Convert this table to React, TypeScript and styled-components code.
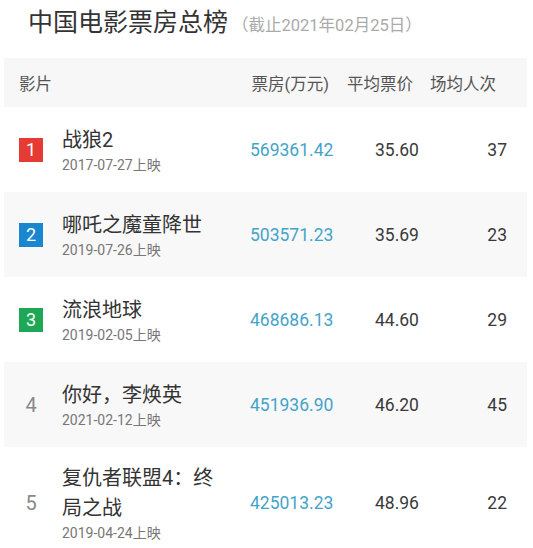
import React from "react";
import styled, { createGlobalStyle } from "styled-components";

const Global = createGlobalStyle`
  html, body { margin: 0; padding: 0; background: #fff; }
  body { font-family: Roboto, "Noto Sans CJK SC", "Noto Sans", sans-serif; color: #333; }
`;

const Page = styled.div`
  width: 533px;
  padding: 6px 6px 0 4px;
  box-sizing: border-box;
`;

const TitleBar = styled.div`
  display: flex;
  align-items: baseline;
  padding-left: 24px;
  height: 52px;
`;

const Title = styled.h1`
  margin: 0;
  font-size: 25px;
  font-weight: 400;
  line-height: 34px;
  color: #333;
`;

const Sub = styled.span`
  margin-left: 4px;
  font-size: 16.5px;
  color: #aaa;
`;

const HeadRow = styled.div`
  display: flex;
  align-items: center;
  height: 49px;
  padding: 0 31px 0 15px;
  background: #f7f7f7;
  font-size: 16.5px;
  color: #555;
`;

const HeadFilm = styled.div`
  flex: 1;
`;

const HeadCell = styled.div<{ $gap: number }>`
  margin-left: ${(p) => p.$gap}px;
`;

const Row = styled.div<{ $alt: boolean }>`
  display: grid;
  grid-template-columns: 246px 125px 1fr 60px;
  align-items: center;
  min-height: 85px;
  padding: 16px 20px 16px 0;
  box-sizing: border-box;
  background: ${(p) => (p.$alt ? "#f8f8f8" : "#fff")};
`;

const Film = styled.div`
  display: flex;
  align-items: center;
  padding-left: 15px;
`;

const Badge = styled.div<{ $color?: string }>`
  flex: none;
  width: 24px;
  height: 24px;
  display: flex;
  align-items: center;
  justify-content: center;
  background: ${(p) => p.$color || "transparent"};
  color: ${(p) => (p.$color ? "#fff" : "#888")};
  font-size: ${(p) => (p.$color ? "18px" : "20px")};
`;

const FilmText = styled.div`
  margin-left: 19px;
  max-width: 160px;
`;

const FilmName = styled.div`
  font-size: 20px;
  line-height: 30px;
  color: #333;
`;

const FilmDate = styled.div`
  font-size: 14px;
  line-height: 20px;
  color: #777;
`;

const Box = styled.div`
  font-size: 17.5px;
  color: #45a3c9;
`;

const Num = styled.div<{ $right?: boolean }>`
  font-size: 17.5px;
  color: #3a3a3a;
  text-align: ${(p) => (p.$right ? "right" : "left")};
`;

const data = [
  { rank: 1, color: "#e63a35", name: "战狼2", date: "2017-07-27上映", box: "569361.42", avg: "35.60", cnt: "37" },
  { rank: 2, color: "#1a86d0", name: "哪吒之魔童降世", date: "2019-07-26上映", box: "503571.23", avg: "35.69", cnt: "23" },
  { rank: 3, color: "#1ea755", name: "流浪地球", date: "2019-02-05上映", box: "468686.13", avg: "44.60", cnt: "29" },
  { rank: 4, color: "", name: "你好，李焕英", date: "2021-02-12上映", box: "451936.90", avg: "46.20", cnt: "45" },
  { rank: 5, color: "", name: "复仇者联盟4：终局之战", date: "2019-04-24上映", box: "425013.23", avg: "48.96", cnt: "22" },
];

export default function App() {
  return (
    <Page>
      <Global />
      <TitleBar>
        <Title>中国电影票房总榜</Title>
        <Sub>（截止2021年02月25日）</Sub>
      </TitleBar>
      <HeadRow>
        <HeadFilm>影片</HeadFilm>
        <HeadCell $gap={0}>票房(万元)</HeadCell>
        <HeadCell $gap={18}>平均票价</HeadCell>
        <HeadCell $gap={17}>场均人次</HeadCell>
      </HeadRow>
      {data.map((d, i) => (
        <Row key={d.rank} $alt={i % 2 === 1}>
          <Film>
            <Badge $color={d.color || undefined}>{d.rank}</Badge>
            <FilmText>
              <FilmName>{d.name}</FilmName>
              <FilmDate>{d.date}</FilmDate>
            </FilmText>
          </Film>
          <Box>{d.box}</Box>
          <Num>{d.avg}</Num>
          <Num $right>{d.cnt}</Num>
        </Row>
      ))}
    </Page>
  );
}
